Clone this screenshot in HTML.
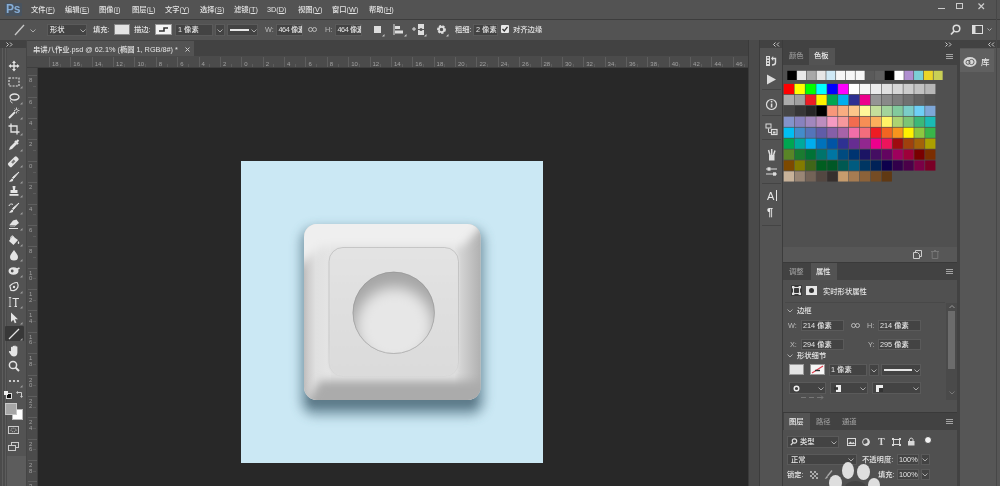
<!DOCTYPE html>
<html lang="zh"><head><meta charset="utf-8"><title>Photoshop</title>
<style>
html,body{margin:0;padding:0;background:#535353}
body{width:1000px;height:486px;overflow:hidden;position:relative;background:#535353;font-family:"Liberation Sans","Noto Sans CJK SC",sans-serif;font-size:7.3px;color:#e4e4e4;line-height:1;font-weight:500}
.a{position:absolute}
.t{position:absolute;white-space:nowrap;line-height:10px;height:10px}
.f{position:absolute;background:#434343;border:1px solid #5a5a5a;box-sizing:border-box}
.sw{position:absolute;width:10px;height:10px}
svg{position:absolute;overflow:visible}
</style></head><body><div id="root" style="position:absolute;left:0;top:0;width:1000px;height:486px;overflow:hidden;will-change:transform;filter:blur(0.4px)">

<div class="a" style="left:0;top:0;width:1000px;height:19px;background:#535353"></div>
<div class="a" style="left:5px;top:3px;width:17px;height:13px;background:#48535f;border-radius:1px"></div>
<div class="t" style="left:6px;top:2px;font-size:12px;line-height:15px;height:15px;font-weight:bold;color:#86add6;letter-spacing:-0.3px">Ps</div>
<div class="t" style="left:31px;top:5px">文件(<u>F</u>)</div>
<div class="t" style="left:65px;top:5px">编辑(<u>E</u>)</div>
<div class="t" style="left:99px;top:5px">图像(<u>I</u>)</div>
<div class="t" style="left:132px;top:5px">图层(<u>L</u>)</div>
<div class="t" style="left:165px;top:5px">文字(<u>Y</u>)</div>
<div class="t" style="left:200px;top:5px">选择(<u>S</u>)</div>
<div class="t" style="left:234px;top:5px">滤镜(<u>T</u>)</div>
<div class="t" style="left:267px;top:5px">3D(<u>D</u>)</div>
<div class="t" style="left:298px;top:5px">视图(<u>V</u>)</div>
<div class="t" style="left:332px;top:5px">窗口(<u>W</u>)</div>
<div class="t" style="left:369px;top:5px">帮助(<u>H</u>)</div>
<div class="a" style="left:938px;top:8px;width:7px;height:1px;background:#ccc"></div>
<div class="a" style="left:956px;top:3px;width:5px;height:4px;border:1px solid #ccc"></div>
<svg style="left:978px;top:3px" width="7" height="7"><path d="M0.5 0.5L6 6M6 0.5L0.5 6" stroke="#ccc" stroke-width="1.2" fill="none"/></svg>
<div class="a" style="left:0;top:19px;width:1000px;height:1px;background:#3d3d3d"></div>
<div class="a" style="left:0;top:20px;width:1000px;height:20px;background:#535353"></div>
<svg style="left:14px;top:24px" width="12" height="12"><path d="M1 11L10 1" stroke="#c8c8c8" stroke-width="1.3"/></svg>
<svg style="left:30px;top:29px" width="6" height="4"><path d="M0.5 0.5L3 3L5.5 0.5" stroke="#aaa" fill="none"/></svg>
<div class="f" style="left:47px;top:24px;width:40px;height:12px"></div>
<div class="t" style="left:50px;top:25px">形状</div>
<svg style="left:80px;top:29px" width="6" height="4"><path d="M0.5 0.5L3 3L5.5 0.5" stroke="#aaa" fill="none"/></svg>
<div class="t" style="left:93px;top:25px">填充:</div>
<div class="a" style="left:114px;top:24px;width:16px;height:11px;background:#e4e4e4;border:1px solid #888;box-sizing:border-box"></div>
<div class="t" style="left:134px;top:25px">描边:</div>
<div class="a" style="left:155px;top:24px;width:17px;height:11px;background:#f4f4f4;border:1px solid #999;box-sizing:border-box"></div>
<svg style="left:155px;top:24px" width="17" height="11"><path d="M4 7H9V4H13" stroke="#333" stroke-width="1.6" fill="none"/></svg>
<div class="f" style="left:175px;top:24px;width:38px;height:12px"></div>
<div class="t" style="left:178px;top:25px">1 像素</div>
<div class="f" style="left:215px;top:24px;width:10px;height:12px"></div>
<svg style="left:217px;top:29px" width="6" height="4"><path d="M0.5 0.5L3 3L5.5 0.5" stroke="#aaa" fill="none"/></svg>
<div class="f" style="left:227px;top:24px;width:31px;height:12px"></div>
<div class="a" style="left:230px;top:29px;width:19px;height:2px;background:#e6e6e6"></div>
<svg style="left:251px;top:29px" width="6" height="4"><path d="M0.5 0.5L3 3L5.5 0.5" stroke="#aaa" fill="none"/></svg>
<div class="t" style="left:265px;top:25px;color:#bbb">W:</div>
<div class="f" style="left:276px;top:24px;width:27px;height:12px;overflow:hidden"><div class="t" style="left:1.5px;top:0px;letter-spacing:-0.45px">464 像素</div></div>
<svg style="left:308px;top:27px" width="10" height="6"><rect x="0.5" y="0.5" width="4" height="4" rx="2" stroke="#bbb" fill="none"/><rect x="4.5" y="0.5" width="4" height="4" rx="2" stroke="#bbb" fill="none"/></svg>
<div class="t" style="left:325px;top:25px;color:#bbb">H:</div>
<div class="f" style="left:335px;top:24px;width:27px;height:12px;overflow:hidden"><div class="t" style="left:1.5px;top:0px;letter-spacing:-0.45px">464 像素</div></div>
<div class="a" style="left:374px;top:26px;width:7px;height:7px;background:#ddd"></div>
<svg style="left:393px;top:24px" width="12" height="12"><path d="M1 0V11" stroke="#ddd"/><rect x="2" y="2" width="5" height="3" fill="#ddd"/><rect x="2" y="6.5" width="8" height="3" fill="#ddd"/></svg>
<svg style="left:412px;top:23px" width="14" height="14"><path d="M0 6H4M2 4V8" stroke="#ddd"/><rect x="6" y="1" width="6" height="5" fill="#ddd"/><rect x="6" y="7" width="6" height="5" fill="#ddd"/><circle cx="9" cy="6.5" r="1.5" fill="#535353"/></svg>
<svg style="left:436px;top:24px" width="11" height="11"><circle cx="5.5" cy="5.5" r="3.2" stroke="#ddd" stroke-width="2.4" fill="none" stroke-dasharray="2 1.1"/><circle cx="5.5" cy="5.5" r="2.6" stroke="#ddd" stroke-width="1.6" fill="none"/></svg>
<svg style="left:382px;top:34px" width="3" height="3"><path d="M2.5 0V2.5H0Z" fill="#c8c8c8"/></svg>
<svg style="left:404px;top:34px" width="3" height="3"><path d="M2.5 0V2.5H0Z" fill="#c8c8c8"/></svg>
<svg style="left:424px;top:34px" width="3" height="3"><path d="M2.5 0V2.5H0Z" fill="#c8c8c8"/></svg>
<svg style="left:446px;top:34px" width="3" height="3"><path d="M2.5 0V2.5H0Z" fill="#c8c8c8"/></svg>
<div class="t" style="left:455px;top:25px">粗细:</div>
<div class="f" style="left:473px;top:24px;width:25px;height:12px"></div>
<div class="t" style="left:476px;top:25px">2 像素</div>
<div class="a" style="left:501px;top:25px;width:8px;height:8px;background:#e8e8e8;border-radius:1px"></div>
<svg style="left:501px;top:25px" width="8" height="8"><path d="M1.5 4L3.3 6L6.5 1.8" stroke="#333" stroke-width="1.3" fill="none"/></svg>
<div class="t" style="left:513px;top:25px">对齐边缘</div>
<svg style="left:950px;top:24px" width="12" height="12"><circle cx="6.5" cy="4.5" r="3.3" stroke="#ddd" stroke-width="1.5" fill="none"/><path d="M4.2 7L1 10.5" stroke="#ddd" stroke-width="1.8"/></svg>
<svg style="left:972px;top:25px" width="22" height="10"><rect x="0.5" y="0.5" width="10" height="8" stroke="#ddd" fill="none"/><rect x="0.5" y="0.5" width="3" height="8" fill="#ddd"/><path d="M15.5 3.5L17.5 5.5L19.5 3.5" stroke="#aaa" fill="none"/></svg>
<div class="a" style="left:0;top:40px;width:1000px;height:16px;background:#424242"></div>
<div class="a" style="left:0;top:40px;width:26px;height:446px;background:#535353"></div>
<div class="a" style="left:0;top:40px;width:26px;height:8px;background:#424242"></div>
<svg style="left:6px;top:42px" width="8" height="5"><path d="M0.5 0.5L2.5 2.5L0.5 4.5M4 0.5L6 2.5L4 4.5" stroke="#ccc" fill="none"/></svg>
<div class="a" style="left:26px;top:40px;width:1px;height:446px;background:#454545"></div>
<div class="a" style="left:0;top:48px;width:7px;height:438px;background:#4b4b4b"></div>
<div class="a" style="left:2px;top:48px;width:1px;height:438px;background:#5c5c5c"></div>
<div class="a" style="left:5px;top:48px;width:1px;height:438px;background:#5c5c5c"></div>
<div class="a" style="left:7px;top:456px;width:19px;height:30px;background:#5c5c5c"></div>
<div class="a" style="left:27px;top:41px;width:167px;height:15px;background:#535353"></div>
<div class="t" style="left:33px;top:44px;height:11px;line-height:11px">串讲八作业.psd @ 62.1% (椭圆 1, RGB/8#) *</div>
<svg style="left:185px;top:47px" width="5" height="5"><path d="M0.5 0.5L4.5 4.5M4.5 0.5L0.5 4.5" stroke="#ccc" fill="none"/></svg>
<div class="a" style="left:27px;top:56px;width:721px;height:430px;background:#282828"></div>
<div class="a" style="left:27px;top:56px;width:721px;height:12px;background:#4b4b4b"></div>
<div class="a" style="left:27px;top:56px;width:11px;height:430px;background:#4b4b4b"></div>
<div class="a" style="left:27px;top:67px;width:721px;height:1px;background:#3e3e3e"></div>
<div class="a" style="left:37px;top:67px;width:1px;height:419px;background:#3e3e3e"></div>
<div class="a" style="left:49.0px;top:57px;width:1px;height:10px;background:#5e5e5e"></div>
<div class="t" style="left:52.0px;top:59px;font-size:6px;color:#a0a0a0">18</div>
<div class="a" style="left:59.7px;top:64px;width:1px;height:3px;background:#5c5c5c"></div>
<div class="a" style="left:70.3px;top:57px;width:1px;height:10px;background:#5e5e5e"></div>
<div class="t" style="left:73.3px;top:59px;font-size:6px;color:#a0a0a0">16</div>
<div class="a" style="left:81.0px;top:64px;width:1px;height:3px;background:#5c5c5c"></div>
<div class="a" style="left:91.7px;top:57px;width:1px;height:10px;background:#5e5e5e"></div>
<div class="t" style="left:94.7px;top:59px;font-size:6px;color:#a0a0a0">14</div>
<div class="a" style="left:102.4px;top:64px;width:1px;height:3px;background:#5c5c5c"></div>
<div class="a" style="left:113.1px;top:57px;width:1px;height:10px;background:#5e5e5e"></div>
<div class="t" style="left:116.1px;top:59px;font-size:6px;color:#a0a0a0">12</div>
<div class="a" style="left:123.8px;top:64px;width:1px;height:3px;background:#5c5c5c"></div>
<div class="a" style="left:134.4px;top:57px;width:1px;height:10px;background:#5e5e5e"></div>
<div class="t" style="left:137.4px;top:59px;font-size:6px;color:#a0a0a0">10</div>
<div class="a" style="left:145.1px;top:64px;width:1px;height:3px;background:#5c5c5c"></div>
<div class="a" style="left:155.8px;top:57px;width:1px;height:10px;background:#5e5e5e"></div>
<div class="t" style="left:158.8px;top:59px;font-size:6px;color:#a0a0a0">8</div>
<div class="a" style="left:166.5px;top:64px;width:1px;height:3px;background:#5c5c5c"></div>
<div class="a" style="left:177.2px;top:57px;width:1px;height:10px;background:#5e5e5e"></div>
<div class="t" style="left:180.2px;top:59px;font-size:6px;color:#a0a0a0">6</div>
<div class="a" style="left:187.9px;top:64px;width:1px;height:3px;background:#5c5c5c"></div>
<div class="a" style="left:198.6px;top:57px;width:1px;height:10px;background:#5e5e5e"></div>
<div class="t" style="left:201.6px;top:59px;font-size:6px;color:#a0a0a0">4</div>
<div class="a" style="left:209.2px;top:64px;width:1px;height:3px;background:#5c5c5c"></div>
<div class="a" style="left:219.9px;top:57px;width:1px;height:10px;background:#5e5e5e"></div>
<div class="t" style="left:222.9px;top:59px;font-size:6px;color:#a0a0a0">2</div>
<div class="a" style="left:230.6px;top:64px;width:1px;height:3px;background:#5c5c5c"></div>
<div class="a" style="left:241.3px;top:57px;width:1px;height:10px;background:#5e5e5e"></div>
<div class="t" style="left:244.3px;top:59px;font-size:6px;color:#a0a0a0">0</div>
<div class="a" style="left:252.0px;top:64px;width:1px;height:3px;background:#5c5c5c"></div>
<div class="a" style="left:262.7px;top:57px;width:1px;height:10px;background:#5e5e5e"></div>
<div class="t" style="left:265.7px;top:59px;font-size:6px;color:#a0a0a0">2</div>
<div class="a" style="left:273.4px;top:64px;width:1px;height:3px;background:#5c5c5c"></div>
<div class="a" style="left:284.0px;top:57px;width:1px;height:10px;background:#5e5e5e"></div>
<div class="t" style="left:287.0px;top:59px;font-size:6px;color:#a0a0a0">4</div>
<div class="a" style="left:294.7px;top:64px;width:1px;height:3px;background:#5c5c5c"></div>
<div class="a" style="left:305.4px;top:57px;width:1px;height:10px;background:#5e5e5e"></div>
<div class="t" style="left:308.4px;top:59px;font-size:6px;color:#a0a0a0">6</div>
<div class="a" style="left:316.1px;top:64px;width:1px;height:3px;background:#5c5c5c"></div>
<div class="a" style="left:326.8px;top:57px;width:1px;height:10px;background:#5e5e5e"></div>
<div class="t" style="left:329.8px;top:59px;font-size:6px;color:#a0a0a0">8</div>
<div class="a" style="left:337.5px;top:64px;width:1px;height:3px;background:#5c5c5c"></div>
<div class="a" style="left:348.2px;top:57px;width:1px;height:10px;background:#5e5e5e"></div>
<div class="t" style="left:351.2px;top:59px;font-size:6px;color:#a0a0a0">10</div>
<div class="a" style="left:358.8px;top:64px;width:1px;height:3px;background:#5c5c5c"></div>
<div class="a" style="left:369.5px;top:57px;width:1px;height:10px;background:#5e5e5e"></div>
<div class="t" style="left:372.5px;top:59px;font-size:6px;color:#a0a0a0">12</div>
<div class="a" style="left:380.2px;top:64px;width:1px;height:3px;background:#5c5c5c"></div>
<div class="a" style="left:390.9px;top:57px;width:1px;height:10px;background:#5e5e5e"></div>
<div class="t" style="left:393.9px;top:59px;font-size:6px;color:#a0a0a0">14</div>
<div class="a" style="left:401.6px;top:64px;width:1px;height:3px;background:#5c5c5c"></div>
<div class="a" style="left:412.3px;top:57px;width:1px;height:10px;background:#5e5e5e"></div>
<div class="t" style="left:415.3px;top:59px;font-size:6px;color:#a0a0a0">16</div>
<div class="a" style="left:422.9px;top:64px;width:1px;height:3px;background:#5c5c5c"></div>
<div class="a" style="left:433.6px;top:57px;width:1px;height:10px;background:#5e5e5e"></div>
<div class="t" style="left:436.6px;top:59px;font-size:6px;color:#a0a0a0">18</div>
<div class="a" style="left:444.3px;top:64px;width:1px;height:3px;background:#5c5c5c"></div>
<div class="a" style="left:455.0px;top:57px;width:1px;height:10px;background:#5e5e5e"></div>
<div class="t" style="left:458.0px;top:59px;font-size:6px;color:#a0a0a0">20</div>
<div class="a" style="left:465.7px;top:64px;width:1px;height:3px;background:#5c5c5c"></div>
<div class="a" style="left:476.4px;top:57px;width:1px;height:10px;background:#5e5e5e"></div>
<div class="t" style="left:479.4px;top:59px;font-size:6px;color:#a0a0a0">22</div>
<div class="a" style="left:487.1px;top:64px;width:1px;height:3px;background:#5c5c5c"></div>
<div class="a" style="left:497.7px;top:57px;width:1px;height:10px;background:#5e5e5e"></div>
<div class="t" style="left:500.7px;top:59px;font-size:6px;color:#a0a0a0">24</div>
<div class="a" style="left:508.4px;top:64px;width:1px;height:3px;background:#5c5c5c"></div>
<div class="a" style="left:519.1px;top:57px;width:1px;height:10px;background:#5e5e5e"></div>
<div class="t" style="left:522.1px;top:59px;font-size:6px;color:#a0a0a0">26</div>
<div class="a" style="left:529.8px;top:64px;width:1px;height:3px;background:#5c5c5c"></div>
<div class="a" style="left:540.5px;top:57px;width:1px;height:10px;background:#5e5e5e"></div>
<div class="t" style="left:543.5px;top:59px;font-size:6px;color:#a0a0a0">28</div>
<div class="a" style="left:551.2px;top:64px;width:1px;height:3px;background:#5c5c5c"></div>
<div class="a" style="left:561.9px;top:57px;width:1px;height:10px;background:#5e5e5e"></div>
<div class="t" style="left:564.9px;top:59px;font-size:6px;color:#a0a0a0">30</div>
<div class="a" style="left:572.5px;top:64px;width:1px;height:3px;background:#5c5c5c"></div>
<div class="a" style="left:583.2px;top:57px;width:1px;height:10px;background:#5e5e5e"></div>
<div class="t" style="left:586.2px;top:59px;font-size:6px;color:#a0a0a0">32</div>
<div class="a" style="left:593.9px;top:64px;width:1px;height:3px;background:#5c5c5c"></div>
<div class="a" style="left:604.6px;top:57px;width:1px;height:10px;background:#5e5e5e"></div>
<div class="t" style="left:607.6px;top:59px;font-size:6px;color:#a0a0a0">34</div>
<div class="a" style="left:615.3px;top:64px;width:1px;height:3px;background:#5c5c5c"></div>
<div class="a" style="left:626.0px;top:57px;width:1px;height:10px;background:#5e5e5e"></div>
<div class="t" style="left:629.0px;top:59px;font-size:6px;color:#a0a0a0">36</div>
<div class="a" style="left:636.6px;top:64px;width:1px;height:3px;background:#5c5c5c"></div>
<div class="a" style="left:647.3px;top:57px;width:1px;height:10px;background:#5e5e5e"></div>
<div class="t" style="left:650.3px;top:59px;font-size:6px;color:#a0a0a0">38</div>
<div class="a" style="left:658.0px;top:64px;width:1px;height:3px;background:#5c5c5c"></div>
<div class="a" style="left:668.7px;top:57px;width:1px;height:10px;background:#5e5e5e"></div>
<div class="t" style="left:671.7px;top:59px;font-size:6px;color:#a0a0a0">40</div>
<div class="a" style="left:679.4px;top:64px;width:1px;height:3px;background:#5c5c5c"></div>
<div class="a" style="left:690.1px;top:57px;width:1px;height:10px;background:#5e5e5e"></div>
<div class="t" style="left:693.1px;top:59px;font-size:6px;color:#a0a0a0">42</div>
<div class="a" style="left:700.8px;top:64px;width:1px;height:3px;background:#5c5c5c"></div>
<div class="a" style="left:711.4px;top:57px;width:1px;height:10px;background:#5e5e5e"></div>
<div class="t" style="left:714.4px;top:59px;font-size:6px;color:#a0a0a0">44</div>
<div class="a" style="left:722.1px;top:64px;width:1px;height:3px;background:#5c5c5c"></div>
<div class="a" style="left:732.8px;top:57px;width:1px;height:10px;background:#5e5e5e"></div>
<div class="t" style="left:735.8px;top:59px;font-size:6px;color:#a0a0a0">46</div>
<div class="a" style="left:743.5px;top:64px;width:1px;height:3px;background:#5c5c5c"></div>
<div class="a" style="left:28px;top:75.3px;width:9px;height:1px;background:#5e5e5e"></div>
<div class="t" style="left:29px;top:77.3px;font-size:6px;color:#a0a0a0;height:6px;line-height:6px">8</div>
<div class="a" style="left:33px;top:86.0px;width:3px;height:1px;background:#5c5c5c"></div>
<div class="a" style="left:28px;top:96.7px;width:9px;height:1px;background:#5e5e5e"></div>
<div class="t" style="left:29px;top:98.7px;font-size:6px;color:#a0a0a0;height:6px;line-height:6px">6</div>
<div class="a" style="left:33px;top:107.4px;width:3px;height:1px;background:#5c5c5c"></div>
<div class="a" style="left:28px;top:118.1px;width:9px;height:1px;background:#5e5e5e"></div>
<div class="t" style="left:29px;top:120.1px;font-size:6px;color:#a0a0a0;height:6px;line-height:6px">4</div>
<div class="a" style="left:33px;top:128.7px;width:3px;height:1px;background:#5c5c5c"></div>
<div class="a" style="left:28px;top:139.4px;width:9px;height:1px;background:#5e5e5e"></div>
<div class="t" style="left:29px;top:141.4px;font-size:6px;color:#a0a0a0;height:6px;line-height:6px">2</div>
<div class="a" style="left:33px;top:150.1px;width:3px;height:1px;background:#5c5c5c"></div>
<div class="a" style="left:28px;top:160.8px;width:9px;height:1px;background:#5e5e5e"></div>
<div class="t" style="left:29px;top:162.8px;font-size:6px;color:#a0a0a0;height:6px;line-height:6px">0</div>
<div class="a" style="left:33px;top:171.5px;width:3px;height:1px;background:#5c5c5c"></div>
<div class="a" style="left:28px;top:182.2px;width:9px;height:1px;background:#5e5e5e"></div>
<div class="t" style="left:29px;top:184.2px;font-size:6px;color:#a0a0a0;height:6px;line-height:6px">2</div>
<div class="a" style="left:33px;top:192.9px;width:3px;height:1px;background:#5c5c5c"></div>
<div class="a" style="left:28px;top:203.5px;width:9px;height:1px;background:#5e5e5e"></div>
<div class="t" style="left:29px;top:205.5px;font-size:6px;color:#a0a0a0;height:6px;line-height:6px">4</div>
<div class="a" style="left:33px;top:214.2px;width:3px;height:1px;background:#5c5c5c"></div>
<div class="a" style="left:28px;top:224.9px;width:9px;height:1px;background:#5e5e5e"></div>
<div class="t" style="left:29px;top:226.9px;font-size:6px;color:#a0a0a0;height:6px;line-height:6px">6</div>
<div class="a" style="left:33px;top:235.6px;width:3px;height:1px;background:#5c5c5c"></div>
<div class="a" style="left:28px;top:246.3px;width:9px;height:1px;background:#5e5e5e"></div>
<div class="t" style="left:29px;top:248.3px;font-size:6px;color:#a0a0a0;height:6px;line-height:6px">8</div>
<div class="a" style="left:33px;top:257.0px;width:3px;height:1px;background:#5c5c5c"></div>
<div class="a" style="left:28px;top:267.7px;width:9px;height:1px;background:#5e5e5e"></div>
<div class="t" style="left:29px;top:269.7px;font-size:6px;color:#a0a0a0;height:6px;line-height:6px">1</div>
<div class="t" style="left:29px;top:275.2px;font-size:6px;color:#a0a0a0;height:6px;line-height:6px">0</div>
<div class="a" style="left:33px;top:278.3px;width:3px;height:1px;background:#5c5c5c"></div>
<div class="a" style="left:28px;top:289.0px;width:9px;height:1px;background:#5e5e5e"></div>
<div class="t" style="left:29px;top:291.0px;font-size:6px;color:#a0a0a0;height:6px;line-height:6px">1</div>
<div class="t" style="left:29px;top:296.5px;font-size:6px;color:#a0a0a0;height:6px;line-height:6px">2</div>
<div class="a" style="left:33px;top:299.7px;width:3px;height:1px;background:#5c5c5c"></div>
<div class="a" style="left:28px;top:310.4px;width:9px;height:1px;background:#5e5e5e"></div>
<div class="t" style="left:29px;top:312.4px;font-size:6px;color:#a0a0a0;height:6px;line-height:6px">1</div>
<div class="t" style="left:29px;top:317.9px;font-size:6px;color:#a0a0a0;height:6px;line-height:6px">4</div>
<div class="a" style="left:33px;top:321.1px;width:3px;height:1px;background:#5c5c5c"></div>
<div class="a" style="left:28px;top:331.8px;width:9px;height:1px;background:#5e5e5e"></div>
<div class="t" style="left:29px;top:333.8px;font-size:6px;color:#a0a0a0;height:6px;line-height:6px">1</div>
<div class="t" style="left:29px;top:339.3px;font-size:6px;color:#a0a0a0;height:6px;line-height:6px">6</div>
<div class="a" style="left:33px;top:342.4px;width:3px;height:1px;background:#5c5c5c"></div>
<div class="a" style="left:28px;top:353.1px;width:9px;height:1px;background:#5e5e5e"></div>
<div class="t" style="left:29px;top:355.1px;font-size:6px;color:#a0a0a0;height:6px;line-height:6px">1</div>
<div class="t" style="left:29px;top:360.6px;font-size:6px;color:#a0a0a0;height:6px;line-height:6px">8</div>
<div class="a" style="left:33px;top:363.8px;width:3px;height:1px;background:#5c5c5c"></div>
<div class="a" style="left:28px;top:374.5px;width:9px;height:1px;background:#5e5e5e"></div>
<div class="t" style="left:29px;top:376.5px;font-size:6px;color:#a0a0a0;height:6px;line-height:6px">2</div>
<div class="t" style="left:29px;top:382.0px;font-size:6px;color:#a0a0a0;height:6px;line-height:6px">0</div>
<div class="a" style="left:33px;top:385.2px;width:3px;height:1px;background:#5c5c5c"></div>
<div class="a" style="left:28px;top:395.9px;width:9px;height:1px;background:#5e5e5e"></div>
<div class="t" style="left:29px;top:397.9px;font-size:6px;color:#a0a0a0;height:6px;line-height:6px">2</div>
<div class="t" style="left:29px;top:403.4px;font-size:6px;color:#a0a0a0;height:6px;line-height:6px">2</div>
<div class="a" style="left:33px;top:406.6px;width:3px;height:1px;background:#5c5c5c"></div>
<div class="a" style="left:28px;top:417.2px;width:9px;height:1px;background:#5e5e5e"></div>
<div class="t" style="left:29px;top:419.2px;font-size:6px;color:#a0a0a0;height:6px;line-height:6px">2</div>
<div class="t" style="left:29px;top:424.7px;font-size:6px;color:#a0a0a0;height:6px;line-height:6px">4</div>
<div class="a" style="left:33px;top:427.9px;width:3px;height:1px;background:#5c5c5c"></div>
<div class="a" style="left:28px;top:438.6px;width:9px;height:1px;background:#5e5e5e"></div>
<div class="t" style="left:29px;top:440.6px;font-size:6px;color:#a0a0a0;height:6px;line-height:6px">2</div>
<div class="t" style="left:29px;top:446.1px;font-size:6px;color:#a0a0a0;height:6px;line-height:6px">6</div>
<div class="a" style="left:33px;top:449.3px;width:3px;height:1px;background:#5c5c5c"></div>
<div class="a" style="left:28px;top:460.0px;width:9px;height:1px;background:#5e5e5e"></div>
<div class="t" style="left:29px;top:462.0px;font-size:6px;color:#a0a0a0;height:6px;line-height:6px">2</div>
<div class="t" style="left:29px;top:467.5px;font-size:6px;color:#a0a0a0;height:6px;line-height:6px">8</div>
<div class="a" style="left:33px;top:470.7px;width:3px;height:1px;background:#5c5c5c"></div>
<div class="a" style="left:28px;top:481.4px;width:9px;height:1px;background:#5e5e5e"></div>
<div class="t" style="left:29px;top:483.4px;font-size:6px;color:#a0a0a0;height:6px;line-height:6px">3</div>
<div class="t" style="left:29px;top:488.9px;font-size:6px;color:#a0a0a0;height:6px;line-height:6px">0</div>
<div class="a" style="left:241px;top:161px;width:302px;height:302px;background:#cbe8f4"></div>
<svg style="left:241px;top:161px;overflow:hidden" width="302" height="302" viewBox="241 161 302 302">
<defs>
<clipPath id="oc"><rect x="304" y="224" width="176.5" height="176" rx="13"/></clipPath>
<clipPath id="cc"><circle cx="393.7" cy="312.8" r="41"/></clipPath>
<filter id="b4" x="-30%" y="-30%" width="160%" height="160%"><feGaussianBlur stdDeviation="3.5"/></filter>
<filter id="b5" x="-30%" y="-30%" width="160%" height="160%"><feGaussianBlur stdDeviation="4"/></filter>
<filter id="b3" x="-30%" y="-30%" width="160%" height="160%"><feGaussianBlur stdDeviation="2.5"/></filter>
<filter id="b1" x="-20%" y="-20%" width="140%" height="140%"><feGaussianBlur stdDeviation="1.2"/></filter>
<filter id="sh" x="-30%" y="-30%" width="160%" height="160%"><feGaussianBlur stdDeviation="6"/></filter>
<filter id="sh2" x="-30%" y="-30%" width="160%" height="160%"><feGaussianBlur stdDeviation="3"/></filter>
<filter id="b6" x="-30%" y="-30%" width="160%" height="160%"><feGaussianBlur stdDeviation="7"/></filter>
<linearGradient id="sg" gradientUnits="userSpaceOnUse" x1="0" y1="247" x2="0" y2="377"><stop offset="0" stop-color="#a4a4a4" stop-opacity="0.6"/><stop offset="0.7" stop-color="#a8a8a8" stop-opacity="0.5"/><stop offset="1" stop-color="#b0b0b0" stop-opacity="0.1"/></linearGradient>
<linearGradient id="lg" x1="0" y1="0" x2="1" y2="0"><stop offset="0" stop-color="#bcbaba"/><stop offset="0.2" stop-color="#cfcece"/><stop offset="0.45" stop-color="#e0e0e0"/><stop offset="1" stop-color="#e5e5e5"/></linearGradient>
<linearGradient id="rg" x1="0" y1="0" x2="1" y2="0"><stop offset="0" stop-color="#e0e0e0"/><stop offset="0.2" stop-color="#d4d4d4"/><stop offset="1" stop-color="#b0b0b0"/></linearGradient>
<linearGradient id="pg" x1="0" y1="0" x2="0" y2="1"><stop offset="0" stop-color="#e3e3e3"/><stop offset="1" stop-color="#dbdbdb"/></linearGradient>
</defs>
<rect x="301" y="228" width="183" height="187" rx="14" fill="#3d5f70" opacity="0.6" filter="url(#sh)"/>
<rect x="308" y="390" width="168" height="17" rx="6" fill="#3d5868" opacity="0.42" filter="url(#sh2)"/>
<g clip-path="url(#oc)">
<rect x="304" y="224" width="177" height="176" fill="#e2e2e2"/>
<rect x="303" y="224" width="28" height="176" fill="url(#lg)"/>
<rect x="455" y="224" width="26" height="176" fill="url(#rg)"/>
<polygon points="280,196 512,196 462,246 322,246 300,266 280,266" fill="#efefef" filter="url(#b5)"/>
<polygon points="290,430 320,381 512,381 512,430" fill="#ababab" filter="url(#b5)"/>
</g>
<rect x="328.5" y="247" width="130.5" height="130" rx="14" fill="url(#pg)" filter="url(#b1)"/>
<rect x="329" y="247.5" width="129.5" height="129" rx="14" fill="none" stroke="url(#sg)" stroke-width="0.8"/>
<g clip-path="url(#cc)">
<rect x="350" y="270" width="90" height="90" fill="#a6a6a6"/>
<circle cx="394.5" cy="326" r="39" fill="#e7e7e7" filter="url(#b6)"/>
</g>
<circle cx="393.7" cy="312.8" r="40.7" fill="none" stroke="#8e8e8e" stroke-width="0.7" opacity="0.7"/>
</svg>
<div class="a" style="left:5px;top:326px;width:19px;height:15px;background:#383838;border-radius:1px"></div>
<svg style="left:7.5px;top:60.3px" width="12" height="12" viewBox="0 0 12 12"><path d="M6 0.5L8 3H6.7V5.3H9V4L11.5 6L9 8V6.7H6.7V9H8L6 11.5L4 9H5.3V6.7H3V8L0.5 6L3 4V5.3H5.3V3H4Z" fill="#e4e4e4"/></svg>
<svg style="left:7.5px;top:76.2px" width="12" height="12" viewBox="0 0 12 12"><rect x="1" y="2" width="10" height="8" fill="none" stroke="#e4e4e4" stroke-width="1.1" stroke-dasharray="2 1.2"/></svg>
<svg style="left:19.5px;top:86.2px" width="3" height="3"><path d="M2.5 0V2.5H0Z" fill="#a0a0a0"/></svg>
<svg style="left:7.5px;top:91.6px" width="12" height="12" viewBox="0 0 12 12"><ellipse cx="6.5" cy="5" rx="4.5" ry="3" fill="none" stroke="#e4e4e4" stroke-width="1.3"/><path d="M3 7.5C2 9 3 10.5 4.5 11" stroke="#e4e4e4" fill="none"/></svg>
<svg style="left:19.5px;top:101.6px" width="3" height="3"><path d="M2.5 0V2.5H0Z" fill="#a0a0a0"/></svg>
<svg style="left:7.5px;top:107.0px" width="12" height="12" viewBox="0 0 12 12"><path d="M1 11L7 5" stroke="#e4e4e4" stroke-width="1.8"/><path d="M8.5 0.5V3M8.5 4.5V6.5M6 3.5H7.5M9.5 3.5H11.5M6.7 1.7L7.6 2.6M10.3 1.7L9.4 2.6M10.3 5.3L9.4 4.4" stroke="#e4e4e4" stroke-width="0.8"/></svg>
<svg style="left:19.5px;top:117.0px" width="3" height="3"><path d="M2.5 0V2.5H0Z" fill="#a0a0a0"/></svg>
<svg style="left:7.5px;top:122.5px" width="12" height="12" viewBox="0 0 12 12"><path d="M3 0.5V9H11.5M0.5 3H9V11.5" stroke="#e4e4e4" stroke-width="1.3" fill="none"/></svg>
<svg style="left:19.5px;top:132.5px" width="3" height="3"><path d="M2.5 0V2.5H0Z" fill="#a0a0a0"/></svg>
<svg style="left:7.5px;top:139.0px" width="12" height="12" viewBox="0 0 12 12"><path d="M1 11L2 8L7 3L9 5L4 10Z" fill="#e4e4e4"/><path d="M7 2L10 5M8 3.5L10.5 1" stroke="#e4e4e4" stroke-width="2"/></svg>
<svg style="left:19.5px;top:149.0px" width="3" height="3"><path d="M2.5 0V2.5H0Z" fill="#a0a0a0"/></svg>
<svg style="left:7.5px;top:154.6px" width="12" height="12" viewBox="0 0 12 12"><rect x="-1" y="3.5" width="12" height="5" rx="1.5" transform="rotate(-45 6 6)" fill="#e4e4e4"/><rect x="3.2" y="4.8" width="3.6" height="2.4" transform="rotate(-45 6 6)" fill="#777"/></svg>
<svg style="left:19.5px;top:164.6px" width="3" height="3"><path d="M2.5 0V2.5H0Z" fill="#a0a0a0"/></svg>
<svg style="left:7.5px;top:171.0px" width="12" height="12" viewBox="0 0 12 12"><path d="M11 1L5.5 7.5L4.5 6.5Z" fill="#e4e4e4" stroke="#e4e4e4" stroke-width="1"/><path d="M4.5 7.5C3 7.5 2.5 9.5 1 10.5C3 11 5.5 10.5 5.2 8.2Z" fill="#e4e4e4"/></svg>
<svg style="left:19.5px;top:181.0px" width="3" height="3"><path d="M2.5 0V2.5H0Z" fill="#a0a0a0"/></svg>
<svg style="left:7.5px;top:185.4px" width="12" height="12" viewBox="0 0 12 12"><path d="M4.5 1H7.5L7 5H9.5V8H2.5V5H5Z" fill="#e4e4e4"/><rect x="1.5" y="9" width="9" height="1.8" fill="#e4e4e4"/></svg>
<svg style="left:19.5px;top:195.4px" width="3" height="3"><path d="M2.5 0V2.5H0Z" fill="#a0a0a0"/></svg>
<svg style="left:7.5px;top:201.9px" width="12" height="12" viewBox="0 0 12 12"><path d="M11 1L5.5 7.5L4.5 6.5Z" fill="#e4e4e4" stroke="#e4e4e4" stroke-width="1"/><path d="M4.5 7.5C3 7.5 2.5 9.5 1 10.5C3 11 5.5 10.5 5.2 8.2Z" fill="#e4e4e4"/><path d="M1 4A2.5 2.5 0 0 1 5 2.5" stroke="#e4e4e4" fill="none"/></svg>
<svg style="left:19.5px;top:211.9px" width="3" height="3"><path d="M2.5 0V2.5H0Z" fill="#a0a0a0"/></svg>
<svg style="left:7.5px;top:218.4px" width="12" height="12" viewBox="0 0 12 12"><path d="M5 2.5L8.5 1.5L11 5L6 9H3L1.5 7Z" fill="#e4e4e4"/><path d="M1.5 7L3 9H6L8 7.3" fill="#8a8a8a"/><path d="M1 10.5H10" stroke="#e4e4e4"/></svg>
<svg style="left:19.5px;top:228.4px" width="3" height="3"><path d="M2.5 0V2.5H0Z" fill="#a0a0a0"/></svg>
<svg style="left:7.5px;top:234.0px" width="12" height="12" viewBox="0 0 12 12"><path d="M4.5 2L10 6L5.5 11L1 7Z" fill="#e4e4e4"/><path d="M3 5.5C2 2 5 0.5 6 3.5" stroke="#e4e4e4" fill="none"/><path d="M10.5 7C11.5 8.5 11.5 10 10.5 10S9.5 8.5 10.5 7Z" fill="#e4e4e4"/></svg>
<svg style="left:19.5px;top:244.0px" width="3" height="3"><path d="M2.5 0V2.5H0Z" fill="#a0a0a0"/></svg>
<svg style="left:7.5px;top:249.4px" width="12" height="12" viewBox="0 0 12 12"><path d="M6 1C8 4 10 5.8 10 8A4 3.6 0 0 1 2 8C2 5.8 4 4 6 1Z" fill="#e4e4e4"/></svg>
<svg style="left:19.5px;top:259.4px" width="3" height="3"><path d="M2.5 0V2.5H0Z" fill="#a0a0a0"/></svg>
<svg style="left:7.5px;top:264.9px" width="12" height="12" viewBox="0 0 12 12"><ellipse cx="5.5" cy="6" rx="5" ry="3.8" fill="#e4e4e4"/><circle cx="4.2" cy="6" r="1.4" fill="#535353"/><path d="M8.5 4.5L11.5 3" stroke="#e4e4e4" stroke-width="1.6"/></svg>
<svg style="left:19.5px;top:274.9px" width="3" height="3"><path d="M2.5 0V2.5H0Z" fill="#a0a0a0"/></svg>
<svg style="left:7.5px;top:281.3px" width="12" height="12" viewBox="0 0 12 12"><path d="M6 0.5C9.5 2 10.5 5.5 8 9L5.5 10.5L2 7.5C2.5 4 3.5 2 6 0.5Z" fill="none" stroke="#e4e4e4" stroke-width="1.2" transform="rotate(35 6 6)"/><circle cx="6" cy="6" r="1.2" fill="#e4e4e4"/></svg>
<svg style="left:19.5px;top:291.3px" width="3" height="3"><path d="M2.5 0V2.5H0Z" fill="#a0a0a0"/></svg>
<svg style="left:7.5px;top:295.7px" width="12" height="12" viewBox="0 0 12 12"><path d="M2 1.5V10.5M0.8 1.5H3.2M0.8 10.5H3.2" stroke="#e4e4e4" stroke-width="0.8" fill="none"/><path d="M4.5 2.5H11M7.75 2.5V10.5M6.5 10.5H9" stroke="#e4e4e4" stroke-width="1.2" fill="none"/></svg>
<svg style="left:19.5px;top:305.7px" width="3" height="3"><path d="M2.5 0V2.5H0Z" fill="#a0a0a0"/></svg>
<svg style="left:7.5px;top:312.2px" width="12" height="12" viewBox="0 0 12 12"><path d="M3 0.5V10L5.3 7.8L6.8 11.3L8.4 10.6L6.9 7.2H10Z" fill="#e4e4e4"/></svg>
<svg style="left:19.5px;top:322.2px" width="3" height="3"><path d="M2.5 0V2.5H0Z" fill="#a0a0a0"/></svg>
<svg style="left:7.5px;top:327.6px" width="12" height="12" viewBox="0 0 12 12"><path d="M1 11L11 1" stroke="#e4e4e4" stroke-width="1.3"/></svg>
<svg style="left:19.5px;top:337.6px" width="3" height="3"><path d="M2.5 0V2.5H0Z" fill="#a0a0a0"/></svg>
<svg style="left:7.5px;top:344.5px" width="12" height="12" viewBox="0 0 12 12"><path d="M3 6V2.5a.8.8 0 0 1 1.6 0V1.5a.8.8 0 0 1 1.6 0V1.2a.8.8 0 0 1 1.6 0V2a.8.8 0 0 1 1.6 0V7.5C9.4 10 8 11.5 6 11.5C4 11.5 3.2 10.5 1 7.2C0.6 6.4 1.6 5.6 2.3 6.3Z" fill="#e4e4e4"/></svg>
<svg style="left:7.5px;top:359.5px" width="12" height="12" viewBox="0 0 12 12"><circle cx="5" cy="5" r="3.6" stroke="#e4e4e4" stroke-width="1.5" fill="none"/><path d="M7.6 7.6L11 11" stroke="#e4e4e4" stroke-width="2"/></svg>
<svg style="left:7.5px;top:375.4px" width="12" height="12" viewBox="0 0 12 12"><circle cx="2" cy="6" r="1.1" fill="#e4e4e4"/><circle cx="6" cy="6" r="1.1" fill="#e4e4e4"/><circle cx="10" cy="6" r="1.1" fill="#e4e4e4"/></svg>
<svg style="left:19.5px;top:385.4px" width="3" height="3"><path d="M2.5 0V2.5H0Z" fill="#a0a0a0"/></svg>
<div class="a" style="left:6px;top:393px;width:4px;height:4px;background:#111;border:0.5px solid #ddd"></div>
<div class="a" style="left:4px;top:391px;width:4px;height:4px;background:#eee"></div>
<svg style="left:16px;top:391px" width="7" height="7"><path d="M1 1.5H5.5V6" stroke="#ccc" fill="none"/><path d="M0 1.5L2 0V3Z M5.5 7L4 5H7Z" fill="#ccc"/></svg>
<div class="a" style="left:12px;top:409px;width:11px;height:11px;background:#ffffff;border:1px solid #bbb;box-sizing:border-box"></div>
<div class="a" style="left:5px;top:403px;width:12px;height:12px;background:#a6a6a6;border:1px solid #c8c8c8;box-sizing:border-box"></div>
<svg style="left:8px;top:426px" width="12" height="9"><rect x="0.5" y="0.5" width="10" height="7" stroke="#ccc" fill="none"/><ellipse cx="5.5" cy="4" rx="2.6" ry="1.8" fill="none" stroke="#ccc" stroke-dasharray="1 1"/></svg>
<svg style="left:8px;top:442px" width="12" height="10"><rect x="3.5" y="0.5" width="7" height="5" stroke="#ccc" fill="none"/><rect x="0.5" y="3.5" width="7" height="5" stroke="#ccc" fill="#535353"/></svg>
<div class="a" style="left:748px;top:40px;width:12px;height:446px;background:#4a4a4a"></div>
<div class="a" style="left:748px;top:40px;width:1px;height:446px;background:#3a3a3a"></div>
<div class="a" style="left:760px;top:40px;width:23px;height:446px;background:#535353"></div>
<div class="a" style="left:760px;top:40px;width:240px;height:8px;background:#424242"></div>
<div class="a" style="left:759px;top:40px;width:1px;height:446px;background:#3c3c3c"></div>
<div class="a" style="left:782px;top:40px;width:1px;height:446px;background:#3c3c3c"></div>
<svg style="left:773px;top:42px" width="7" height="5"><path d="M2.5 0.5L0.5 2.5L2.5 4.5M6 0.5L4 2.5L6 4.5" stroke="#ccc" fill="none"/></svg>
<svg style="left:945px;top:42px" width="7" height="5"><path d="M0.5 0.5L2.5 2.5L0.5 4.5M4 0.5L6 2.5L4 4.5" stroke="#ccc" fill="none"/></svg>
<svg style="left:988px;top:42px" width="7" height="5"><path d="M2.5 0.5L0.5 2.5L2.5 4.5M6 0.5L4 2.5L6 4.5" stroke="#ccc" fill="none"/></svg>
<div class="a" style="left:762px;top:89px;width:19px;height:1px;background:#444"></div>
<div class="a" style="left:762px;top:115px;width:19px;height:1px;background:#444"></div>
<div class="a" style="left:762px;top:139px;width:19px;height:1px;background:#444"></div>
<div class="a" style="left:762px;top:183px;width:19px;height:1px;background:#444"></div>
<div class="a" style="left:762px;top:225px;width:19px;height:1px;background:#444"></div>
<svg style="left:765px;top:54.5px" width="13" height="13" viewBox="0 0 13 13"><rect x="1" y="1" width="4" height="10" fill="#dcdcdc"/><rect x="2" y="2.2" width="2" height="1.2" fill="#535353"/><rect x="2" y="5" width="2" height="1.2" fill="#535353"/><rect x="2" y="7.8" width="2" height="1.2" fill="#535353"/><path d="M7 3.5H10.5V7.5C10.5 9.5 9 10 7 10" stroke="#dcdcdc" stroke-width="1.4" fill="none"/><path d="M8.2 1L6 3.5L8.2 6Z" fill="#dcdcdc"/></svg>
<svg style="left:765px;top:72.5px" width="13" height="13" viewBox="0 0 13 13"><path d="M2 1.5L11 6.5L2 11.5Z" fill="#dcdcdc"/></svg>
<svg style="left:765px;top:97.5px" width="13" height="13" viewBox="0 0 13 13"><circle cx="6.5" cy="6.5" r="5" stroke="#dcdcdc" stroke-width="1.2" fill="none"/><rect x="5.8" y="5.5" width="1.6" height="4" fill="#dcdcdc"/><circle cx="6.6" cy="3.7" r="0.9" fill="#dcdcdc"/></svg>
<svg style="left:765px;top:122.5px" width="13" height="13" viewBox="0 0 13 13"><rect x="1" y="1" width="5" height="4" fill="none" stroke="#dcdcdc"/><rect x="6.5" y="6.5" width="5.5" height="5" fill="none" stroke="#dcdcdc" stroke-width="1.2"/><path d="M3.5 5.5V9.5H6" stroke="#dcdcdc" fill="none"/><path d="M8 8.5h2.5v2H8z" fill="#dcdcdc"/></svg>
<svg style="left:765px;top:147.5px" width="13" height="13" viewBox="0 0 13 13"><rect x="4" y="7" width="5.5" height="5.5" fill="#dcdcdc"/><path d="M5 7L3.5 2M6.7 7V1M8.5 7L10 2.5" stroke="#dcdcdc" stroke-width="1.5"/></svg>
<svg style="left:765px;top:164.5px" width="13" height="13" viewBox="0 0 13 13"><path d="M1 4H12M1 9H12" stroke="#dcdcdc" stroke-width="1.2"/><rect x="2.5" y="2.3" width="3" height="3.4" fill="#dcdcdc"/><rect x="8" y="7.3" width="3" height="3.4" fill="#dcdcdc"/></svg>
<div class="t" style="left:767px;top:190px;font-size:11px;height:12px;line-height:12px;color:#e8e8e8">A</div><div class="a" style="left:776px;top:190px;width:1px;height:11px;background:#e8e8e8"></div>
<div class="t" style="left:767px;top:206px;font-size:11px;height:13px;line-height:13px;color:#e8e8e8;font-weight:bold">¶</div>
<div class="a" style="left:783px;top:48px;width:175px;height:438px;background:#505050"></div>
<div class="a" style="left:783px;top:48px;width:175px;height:17px;background:#424242"></div>
<div class="a" style="left:809px;top:48px;width:26px;height:17px;background:#535353"></div>
<div class="t" style="left:789px;top:51px;color:#9a9a9a">颜色</div>
<div class="t" style="left:814px;top:51px;color:#eee">色板</div>
<svg style="left:946px;top:54px" width="7" height="6"><path d="M0 0.5H7M0 2.5H7M0 4.5H7" stroke="#a4a4a4" stroke-width="1"/></svg>
<svg style="left:783px;top:65px" width="175" height="125" viewBox="783 65 175 125"><rect x="787.30" y="70.8" width="9.1" height="9.2" fill="#000000"/><rect x="797.05" y="70.8" width="9.1" height="9.2" fill="#e9e9e9"/><rect x="806.80" y="70.8" width="9.1" height="9.2" fill="#a8a8a8"/><rect x="816.55" y="70.8" width="9.1" height="9.2" fill="#e6e6e6"/><rect x="826.30" y="70.8" width="9.1" height="9.2" fill="#cfe9f6"/><rect x="836.05" y="70.8" width="9.1" height="9.2" fill="#f7f7f7"/><rect x="845.80" y="70.8" width="9.1" height="9.2" fill="#f7f7f7"/><rect x="855.55" y="70.8" width="9.1" height="9.2" fill="#f7f7f7"/><rect x="865.30" y="70.8" width="9.1" height="9.2" fill="#5a5a5a"/><rect x="875.05" y="70.8" width="9.1" height="9.2" fill="#606060"/><rect x="884.80" y="70.8" width="9.1" height="9.2" fill="#000000"/><rect x="894.55" y="70.8" width="9.1" height="9.2" fill="#ffffff"/><rect x="904.30" y="70.8" width="9.1" height="9.2" fill="#b08fd0"/><rect x="914.05" y="70.8" width="9.1" height="9.2" fill="#7ccfd6"/><rect x="923.80" y="70.8" width="9.1" height="9.2" fill="#ecd528"/><rect x="933.55" y="70.8" width="9.1" height="9.2" fill="#c9cf55"/><rect x="783.70" y="83.90" width="10.3" height="10.2" fill="#ff0000"/><rect x="794.58" y="83.90" width="10.3" height="10.2" fill="#ffff00"/><rect x="805.46" y="83.90" width="10.3" height="10.2" fill="#00ff00"/><rect x="816.34" y="83.90" width="10.3" height="10.2" fill="#00ffff"/><rect x="827.22" y="83.90" width="10.3" height="10.2" fill="#0000ff"/><rect x="838.10" y="83.90" width="10.3" height="10.2" fill="#ff00ff"/><rect x="848.98" y="83.90" width="10.3" height="10.2" fill="#ffffff"/><rect x="859.86" y="83.90" width="10.3" height="10.2" fill="#f5f5f5"/><rect x="870.74" y="83.90" width="10.3" height="10.2" fill="#ebebeb"/><rect x="881.62" y="83.90" width="10.3" height="10.2" fill="#e1e1e1"/><rect x="892.50" y="83.90" width="10.3" height="10.2" fill="#d7d7d7"/><rect x="903.38" y="83.90" width="10.3" height="10.2" fill="#cccccc"/><rect x="914.26" y="83.90" width="10.3" height="10.2" fill="#c2c2c2"/><rect x="925.14" y="83.90" width="10.3" height="10.2" fill="#b7b7b7"/><rect x="783.70" y="94.83" width="10.3" height="10.2" fill="#acacac"/><rect x="794.58" y="94.83" width="10.3" height="10.2" fill="#a0a0a0"/><rect x="805.46" y="94.83" width="10.3" height="10.2" fill="#ed1c24"/><rect x="816.34" y="94.83" width="10.3" height="10.2" fill="#fff200"/><rect x="827.22" y="94.83" width="10.3" height="10.2" fill="#00a651"/><rect x="838.10" y="94.83" width="10.3" height="10.2" fill="#00aeef"/><rect x="848.98" y="94.83" width="10.3" height="10.2" fill="#2e3192"/><rect x="859.86" y="94.83" width="10.3" height="10.2" fill="#ec008c"/><rect x="870.74" y="94.83" width="10.3" height="10.2" fill="#959595"/><rect x="881.62" y="94.83" width="10.3" height="10.2" fill="#898989"/><rect x="892.50" y="94.83" width="10.3" height="10.2" fill="#7d7d7d"/><rect x="903.38" y="94.83" width="10.3" height="10.2" fill="#707070"/><rect x="914.26" y="94.83" width="10.3" height="10.2" fill="#626262"/><rect x="925.14" y="94.83" width="10.3" height="10.2" fill="#555555"/><rect x="783.70" y="105.76" width="10.3" height="10.2" fill="#464646"/><rect x="794.58" y="105.76" width="10.3" height="10.2" fill="#363636"/><rect x="805.46" y="105.76" width="10.3" height="10.2" fill="#262626"/><rect x="816.34" y="105.76" width="10.3" height="10.2" fill="#000000"/><rect x="827.22" y="105.76" width="10.3" height="10.2" fill="#f7977a"/><rect x="838.10" y="105.76" width="10.3" height="10.2" fill="#f9ad81"/><rect x="848.98" y="105.76" width="10.3" height="10.2" fill="#fdc68a"/><rect x="859.86" y="105.76" width="10.3" height="10.2" fill="#fff79a"/><rect x="870.74" y="105.76" width="10.3" height="10.2" fill="#c4df9b"/><rect x="881.62" y="105.76" width="10.3" height="10.2" fill="#a2d39c"/><rect x="892.50" y="105.76" width="10.3" height="10.2" fill="#82ca9d"/><rect x="903.38" y="105.76" width="10.3" height="10.2" fill="#7bcdc8"/><rect x="914.26" y="105.76" width="10.3" height="10.2" fill="#6ecff6"/><rect x="925.14" y="105.76" width="10.3" height="10.2" fill="#7ea7d8"/><rect x="783.70" y="116.69" width="10.3" height="10.2" fill="#8493ca"/><rect x="794.58" y="116.69" width="10.3" height="10.2" fill="#8882be"/><rect x="805.46" y="116.69" width="10.3" height="10.2" fill="#a187be"/><rect x="816.34" y="116.69" width="10.3" height="10.2" fill="#bc8dbf"/><rect x="827.22" y="116.69" width="10.3" height="10.2" fill="#f49ac2"/><rect x="838.10" y="116.69" width="10.3" height="10.2" fill="#f6989d"/><rect x="848.98" y="116.69" width="10.3" height="10.2" fill="#f26c4f"/><rect x="859.86" y="116.69" width="10.3" height="10.2" fill="#f68e55"/><rect x="870.74" y="116.69" width="10.3" height="10.2" fill="#fbaf5c"/><rect x="881.62" y="116.69" width="10.3" height="10.2" fill="#fff467"/><rect x="892.50" y="116.69" width="10.3" height="10.2" fill="#acd372"/><rect x="903.38" y="116.69" width="10.3" height="10.2" fill="#7cc576"/><rect x="914.26" y="116.69" width="10.3" height="10.2" fill="#3bb878"/><rect x="925.14" y="116.69" width="10.3" height="10.2" fill="#1abbb4"/><rect x="783.70" y="127.62" width="10.3" height="10.2" fill="#00bff3"/><rect x="794.58" y="127.62" width="10.3" height="10.2" fill="#438cca"/><rect x="805.46" y="127.62" width="10.3" height="10.2" fill="#5574b9"/><rect x="816.34" y="127.62" width="10.3" height="10.2" fill="#605ca8"/><rect x="827.22" y="127.62" width="10.3" height="10.2" fill="#855fa8"/><rect x="838.10" y="127.62" width="10.3" height="10.2" fill="#a763a8"/><rect x="848.98" y="127.62" width="10.3" height="10.2" fill="#f06ea9"/><rect x="859.86" y="127.62" width="10.3" height="10.2" fill="#f26d7d"/><rect x="870.74" y="127.62" width="10.3" height="10.2" fill="#ed1c24"/><rect x="881.62" y="127.62" width="10.3" height="10.2" fill="#f26522"/><rect x="892.50" y="127.62" width="10.3" height="10.2" fill="#f7941d"/><rect x="903.38" y="127.62" width="10.3" height="10.2" fill="#fff200"/><rect x="914.26" y="127.62" width="10.3" height="10.2" fill="#8dc73f"/><rect x="925.14" y="127.62" width="10.3" height="10.2" fill="#39b54a"/><rect x="783.70" y="138.55" width="10.3" height="10.2" fill="#00a651"/><rect x="794.58" y="138.55" width="10.3" height="10.2" fill="#00a99d"/><rect x="805.46" y="138.55" width="10.3" height="10.2" fill="#00aeef"/><rect x="816.34" y="138.55" width="10.3" height="10.2" fill="#0072bc"/><rect x="827.22" y="138.55" width="10.3" height="10.2" fill="#0054a6"/><rect x="838.10" y="138.55" width="10.3" height="10.2" fill="#2e3192"/><rect x="848.98" y="138.55" width="10.3" height="10.2" fill="#662d91"/><rect x="859.86" y="138.55" width="10.3" height="10.2" fill="#92278f"/><rect x="870.74" y="138.55" width="10.3" height="10.2" fill="#ec008c"/><rect x="881.62" y="138.55" width="10.3" height="10.2" fill="#ed145b"/><rect x="892.50" y="138.55" width="10.3" height="10.2" fill="#9e0b0f"/><rect x="903.38" y="138.55" width="10.3" height="10.2" fill="#a0410d"/><rect x="914.26" y="138.55" width="10.3" height="10.2" fill="#a36209"/><rect x="925.14" y="138.55" width="10.3" height="10.2" fill="#aba000"/><rect x="783.70" y="149.48" width="10.3" height="10.2" fill="#598527"/><rect x="794.58" y="149.48" width="10.3" height="10.2" fill="#1a7b30"/><rect x="805.46" y="149.48" width="10.3" height="10.2" fill="#007236"/><rect x="816.34" y="149.48" width="10.3" height="10.2" fill="#00746b"/><rect x="827.22" y="149.48" width="10.3" height="10.2" fill="#0076a3"/><rect x="838.10" y="149.48" width="10.3" height="10.2" fill="#004b80"/><rect x="848.98" y="149.48" width="10.3" height="10.2" fill="#003471"/><rect x="859.86" y="149.48" width="10.3" height="10.2" fill="#1b1464"/><rect x="870.74" y="149.48" width="10.3" height="10.2" fill="#440e62"/><rect x="881.62" y="149.48" width="10.3" height="10.2" fill="#630460"/><rect x="892.50" y="149.48" width="10.3" height="10.2" fill="#9e005d"/><rect x="903.38" y="149.48" width="10.3" height="10.2" fill="#9e0039"/><rect x="914.26" y="149.48" width="10.3" height="10.2" fill="#790000"/><rect x="925.14" y="149.48" width="10.3" height="10.2" fill="#7b2e00"/><rect x="783.70" y="160.41" width="10.3" height="10.2" fill="#7d4900"/><rect x="794.58" y="160.41" width="10.3" height="10.2" fill="#827b00"/><rect x="805.46" y="160.41" width="10.3" height="10.2" fill="#406618"/><rect x="816.34" y="160.41" width="10.3" height="10.2" fill="#005e20"/><rect x="827.22" y="160.41" width="10.3" height="10.2" fill="#005826"/><rect x="838.10" y="160.41" width="10.3" height="10.2" fill="#005952"/><rect x="848.98" y="160.41" width="10.3" height="10.2" fill="#005b7f"/><rect x="859.86" y="160.41" width="10.3" height="10.2" fill="#003663"/><rect x="870.74" y="160.41" width="10.3" height="10.2" fill="#002157"/><rect x="881.62" y="160.41" width="10.3" height="10.2" fill="#0d004c"/><rect x="892.50" y="160.41" width="10.3" height="10.2" fill="#32004b"/><rect x="903.38" y="160.41" width="10.3" height="10.2" fill="#4b0049"/><rect x="914.26" y="160.41" width="10.3" height="10.2" fill="#7b0046"/><rect x="925.14" y="160.41" width="10.3" height="10.2" fill="#7a0026"/><rect x="783.70" y="171.34" width="10.3" height="10.2" fill="#c7b299"/><rect x="794.58" y="171.34" width="10.3" height="10.2" fill="#998675"/><rect x="805.46" y="171.34" width="10.3" height="10.2" fill="#736357"/><rect x="816.34" y="171.34" width="10.3" height="10.2" fill="#534741"/><rect x="827.22" y="171.34" width="10.3" height="10.2" fill="#362f2d"/><rect x="838.10" y="171.34" width="10.3" height="10.2" fill="#c69c6d"/><rect x="848.98" y="171.34" width="10.3" height="10.2" fill="#a67c52"/><rect x="859.86" y="171.34" width="10.3" height="10.2" fill="#8c6239"/><rect x="870.74" y="171.34" width="10.3" height="10.2" fill="#754c24"/><rect x="881.62" y="171.34" width="10.3" height="10.2" fill="#603913"/></svg>
<div class="a" style="left:783px;top:247px;width:175px;height:15px;background:#575757"></div>
<svg style="left:913px;top:250px" width="9" height="9"><path d="M0.5 2.5V8.5H6.5V4.5L4.5 2.5Z M2.5 2.5V0.5H8.5V6.5H6.5" stroke="#ccc" fill="none"/></svg>
<svg style="left:931px;top:250px" width="8" height="9"><path d="M0 1.5H8M3 0.5H5M1.2 2V8.5H6.8V2" stroke="#777" fill="none"/></svg>
<div class="a" style="left:783px;top:262px;width:175px;height:1px;background:#3a3a3a"></div>
<div class="a" style="left:783px;top:263px;width:175px;height:17px;background:#424242"></div>
<div class="a" style="left:811px;top:263px;width:26px;height:17px;background:#535353"></div>
<div class="t" style="left:789px;top:267px;color:#9a9a9a">调整</div>
<div class="t" style="left:816px;top:267px;color:#eee">属性</div>
<svg style="left:946px;top:269px" width="7" height="6"><path d="M0 0.5H7M0 2.5H7M0 4.5H7" stroke="#a4a4a4" stroke-width="1"/></svg>
<div class="a" style="left:791px;top:285px;width:11px;height:11px;background:#3a3a3a;border-radius:1px"></div>
<svg style="left:792px;top:286px" width="9" height="9"><rect x="1.5" y="1.5" width="6" height="6" fill="none" stroke="#e0e0e0"/><rect x="0" y="0" width="2.4" height="2.4" fill="#e0e0e0"/><rect x="6.6" y="0" width="2.4" height="2.4" fill="#e0e0e0"/><rect x="0" y="6.6" width="2.4" height="2.4" fill="#e0e0e0"/><rect x="6.6" y="6.6" width="2.4" height="2.4" fill="#e0e0e0"/></svg>
<div class="a" style="left:806px;top:286px;width:11px;height:9px;background:#e6e6e6"></div>
<div class="a" style="left:809px;top:288px;width:5px;height:5px;background:#333;border-radius:3px"></div>
<div class="t" style="left:823px;top:287px">实时形状属性</div>
<div class="a" style="left:785px;top:302px;width:160px;height:1px;background:#484848"></div>
<svg style="left:787px;top:309px" width="6" height="4"><path d="M0.5 0.5L3 3L5.5 0.5" stroke="#aaa" fill="none"/></svg>
<div class="t" style="left:797px;top:306px">边框</div>
<div class="t" style="left:788px;top:321px;color:#bbb">W:</div>
<div class="f" style="left:801px;top:320px;width:43px;height:11px"></div>
<div class="t" style="left:803px;top:321px">214 像素</div>
<svg style="left:851px;top:323px" width="10" height="6"><rect x="0.5" y="0.5" width="4" height="4" rx="2" stroke="#bbb" fill="none"/><rect x="4.5" y="0.5" width="4" height="4" rx="2" stroke="#bbb" fill="none"/></svg>
<div class="t" style="left:867px;top:321px;color:#bbb">H:</div>
<div class="f" style="left:878px;top:320px;width:43px;height:11px"></div>
<div class="t" style="left:880px;top:321px">214 像素</div>
<div class="t" style="left:790px;top:340px;color:#bbb">X:</div>
<div class="f" style="left:801px;top:339px;width:43px;height:11px"></div>
<div class="t" style="left:803px;top:340px">294 像素</div>
<div class="t" style="left:868px;top:340px;color:#bbb">Y:</div>
<div class="f" style="left:878px;top:339px;width:43px;height:11px"></div>
<div class="t" style="left:880px;top:340px">295 像素</div>
<svg style="left:787px;top:354px" width="6" height="4"><path d="M0.5 0.5L3 3L5.5 0.5" stroke="#aaa" fill="none"/></svg>
<div class="t" style="left:797px;top:351px">形状细节</div>
<div class="a" style="left:789px;top:364px;width:15px;height:11px;background:#e4e4e4;border:1px solid #999;box-sizing:border-box"></div>
<div class="a" style="left:810px;top:364px;width:15px;height:11px;background:#f6f6f6;border:1px solid #999;box-sizing:border-box"></div>
<svg style="left:810px;top:364px" width="15" height="11"><path d="M2 9L13 2" stroke="#e04050" stroke-width="1.2"/><path d="M5 6.5H10" stroke="#333" stroke-width="1.4"/></svg>
<div class="f" style="left:829px;top:364px;width:38px;height:12px"></div>
<div class="t" style="left:831px;top:365px">1 像素</div>
<div class="f" style="left:869px;top:364px;width:10px;height:12px"></div>
<svg style="left:871px;top:369px" width="6" height="4"><path d="M0.5 0.5L3 3L5.5 0.5" stroke="#aaa" fill="none"/></svg>
<div class="f" style="left:881px;top:364px;width:40px;height:12px"></div>
<div class="a" style="left:884px;top:369px;width:28px;height:1.5px;background:#e6e6e6"></div>
<svg style="left:914px;top:369px" width="6" height="4"><path d="M0.5 0.5L3 3L5.5 0.5" stroke="#aaa" fill="none"/></svg>
<div class="f" style="left:789px;top:382px;width:37px;height:12px"></div>
<svg style="left:793px;top:385px" width="7" height="7"><circle cx="3.5" cy="3.5" r="2.3" stroke="#eee" stroke-width="1.4" fill="none"/></svg>
<svg style="left:818px;top:387px" width="6" height="4"><path d="M0.5 0.5L3 3L5.5 0.5" stroke="#aaa" fill="none"/></svg>
<div class="f" style="left:830px;top:382px;width:38px;height:12px"></div>
<svg style="left:834px;top:385px" width="8" height="7"><rect x="2" y="0" width="5" height="7" fill="#eee"/><rect x="0" y="2.2" width="4" height="2.6" fill="#333"/></svg>
<svg style="left:860px;top:387px" width="6" height="4"><path d="M0.5 0.5L3 3L5.5 0.5" stroke="#aaa" fill="none"/></svg>
<div class="f" style="left:872px;top:382px;width:49px;height:12px"></div>
<svg style="left:876px;top:385px" width="8" height="7"><rect x="0" y="0" width="7" height="7" fill="#eee"/><rect x="3" y="3" width="4" height="4" fill="#333"/></svg>
<svg style="left:913px;top:387px" width="6" height="4"><path d="M0.5 0.5L3 3L5.5 0.5" stroke="#aaa" fill="none"/></svg>
<svg style="left:800px;top:395px" width="26" height="5"><path d="M1 2.5H6M9 2.5H14M17 2.5H23M21 0.5L23 2.5L21 4.5" stroke="#777" fill="none"/></svg>
<div class="a" style="left:946px;top:303px;width:11px;height:97px;background:#4a4a4a"></div>
<div class="a" style="left:948px;top:311px;width:7px;height:58px;background:#6c6c6c"></div>
<svg style="left:949px;top:305px" width="6" height="4"><path d="M0.5 3L3 0.5L5.5 3" stroke="#999" fill="none"/></svg>
<svg style="left:949px;top:391px" width="6" height="4"><path d="M0.5 0.5L3 3L5.5 0.5" stroke="#777" fill="none"/></svg>
<div class="a" style="left:783px;top:412px;width:175px;height:1px;background:#3a3a3a"></div>
<div class="a" style="left:783px;top:413px;width:175px;height:17px;background:#424242"></div>
<div class="a" style="left:784px;top:413px;width:26px;height:17px;background:#535353"></div>
<div class="t" style="left:789px;top:417px;color:#eee">图层</div>
<div class="t" style="left:816px;top:417px;color:#9a9a9a">路径</div>
<div class="t" style="left:842px;top:417px;color:#9a9a9a">通道</div>
<svg style="left:946px;top:419px" width="7" height="6"><path d="M0 0.5H7M0 2.5H7M0 4.5H7" stroke="#a4a4a4" stroke-width="1"/></svg>
<div class="f" style="left:787px;top:436px;width:52px;height:12px"></div>
<svg style="left:790px;top:438px" width="8" height="8"><circle cx="4.5" cy="3" r="2.2" stroke="#ddd" stroke-width="1.2" fill="none"/><path d="M3 4.6L0.8 7.2" stroke="#ddd" stroke-width="1.3"/></svg>
<div class="t" style="left:800px;top:437px">类型</div>
<svg style="left:831px;top:441px" width="6" height="4"><path d="M0.5 0.5L3 3L5.5 0.5" stroke="#aaa" fill="none"/></svg>
<svg style="left:847px;top:438px" width="9" height="8"><rect x="0.5" y="0.5" width="8" height="7" stroke="#d8d8d8" fill="none"/><path d="M1 6L3.5 3.5L5 5L6.5 4L8 6Z" fill="#d8d8d8"/></svg>
<svg style="left:862px;top:438px" width="8" height="8"><circle cx="4" cy="4" r="3.4" stroke="#d8d8d8" fill="none"/><path d="M4 0.6A3.4 3.4 0 0 1 4 7.4A5 5 0 0 0 4 0.6Z" fill="#d8d8d8"/><path d="M1.6 6.4A3.4 3.4 0 0 0 7.4 4Z" fill="#d8d8d8"/></svg>
<div class="t" style="left:878px;top:437px;font-family:'Liberation Serif',serif;font-weight:bold;font-size:10px;color:#d8d8d8">T</div>
<svg style="left:892px;top:438px" width="9" height="8"><rect x="1.5" y="1.5" width="6" height="5" stroke="#d8d8d8" fill="none"/><rect x="0" y="0" width="2" height="2" fill="#d8d8d8"/><rect x="7" y="0" width="2" height="2" fill="#d8d8d8"/><rect x="0" y="6" width="2" height="2" fill="#d8d8d8"/><rect x="7" y="6" width="2" height="2" fill="#d8d8d8"/></svg>
<svg style="left:907px;top:437px" width="9" height="9"><rect x="1" y="4" width="6.5" height="4.5" fill="#d8d8d8"/><path d="M2.5 4V2.5A1.8 1.8 0 0 1 6 2.5V4" stroke="#d8d8d8" fill="none"/></svg>
<div class="a" style="left:924px;top:436px;width:6px;height:6px;border-radius:4px;background:#f2f2f2;border:1px solid #444"></div>
<div class="f" style="left:787px;top:454px;width:70px;height:11px"></div>
<div class="t" style="left:791px;top:455px">正常</div>
<svg style="left:848px;top:458px" width="6" height="4"><path d="M0.5 0.5L3 3L5.5 0.5" stroke="#aaa" fill="none"/></svg>
<div class="t" style="left:862px;top:455px">不透明度:</div>
<div class="f" style="left:897px;top:454px;width:22px;height:11px"></div>
<div class="t" style="left:899px;top:455px">100%</div>
<div class="f" style="left:921px;top:454px;width:9px;height:11px"></div>
<svg style="left:922px;top:458px" width="6" height="4"><path d="M0.5 0.5L3 3L5.5 0.5" stroke="#aaa" fill="none"/></svg>
<div class="t" style="left:787px;top:470px">锁定:</div>
<svg style="left:810px;top:471px" width="8" height="8"><path d="M0 0H2V2H0ZM4 0H6V2H4ZM2 2H4V4H2ZM6 2H8V4H6ZM0 4H2V6H0ZM4 4H6V6H4ZM2 6H4V8H2ZM6 6H8V8H6Z" fill="#aaa"/></svg>
<svg style="left:824px;top:470px" width="9" height="9"><path d="M8 0.5L3.5 6" stroke="#aaa" stroke-width="1.3"/><path d="M3.5 6C2 6 2 8 0.5 8.5C2.5 9 4.2 8 3.8 6.3Z" fill="#aaa"/></svg>
<div class="t" style="left:878px;top:470px">填充:</div>
<div class="f" style="left:897px;top:469px;width:22px;height:11px"></div>
<div class="t" style="left:899px;top:470px">100%</div>
<div class="f" style="left:921px;top:469px;width:9px;height:11px"></div>
<svg style="left:922px;top:473px" width="6" height="4"><path d="M0.5 0.5L3 3L5.5 0.5" stroke="#aaa" fill="none"/></svg>
<div class="a" style="left:842px;top:462px;width:12px;height:17px;border-radius:50%;background:#dedede"></div>
<div class="a" style="left:857px;top:464px;width:13px;height:16px;border-radius:50%;background:#dedede"></div>
<div class="a" style="left:829px;top:475px;width:13px;height:16px;border-radius:50%;background:#dedede"></div>
<div class="a" style="left:868px;top:478px;width:12px;height:14px;border-radius:50%;background:#dedede"></div>
<div class="a" style="left:845px;top:481px;width:21px;height:12px;border-radius:50% 50% 0 0;background:#444"></div>
<div class="a" style="left:957px;top:40px;width:3px;height:446px;background:#424242"></div>
<div class="a" style="left:960px;top:48px;width:40px;height:438px;background:#565656"></div>
<div class="a" style="left:960px;top:49px;width:34px;height:23px;background:#606060"></div>
<svg style="left:963px;top:56px" width="14" height="12"><ellipse cx="7" cy="6" rx="6.5" ry="5" fill="#d8d8d8"/><circle cx="5" cy="6.3" r="2" fill="none" stroke="#555" stroke-width="0.9"/><circle cx="8.5" cy="6" r="2.6" fill="none" stroke="#555" stroke-width="0.9"/></svg>
<div class="t" style="left:981px;top:57px;font-size:8.5px">库</div>
<div class="a" style="left:996px;top:0px;width:1px;height:486px;background:#474747"></div>
</div></body></html>
